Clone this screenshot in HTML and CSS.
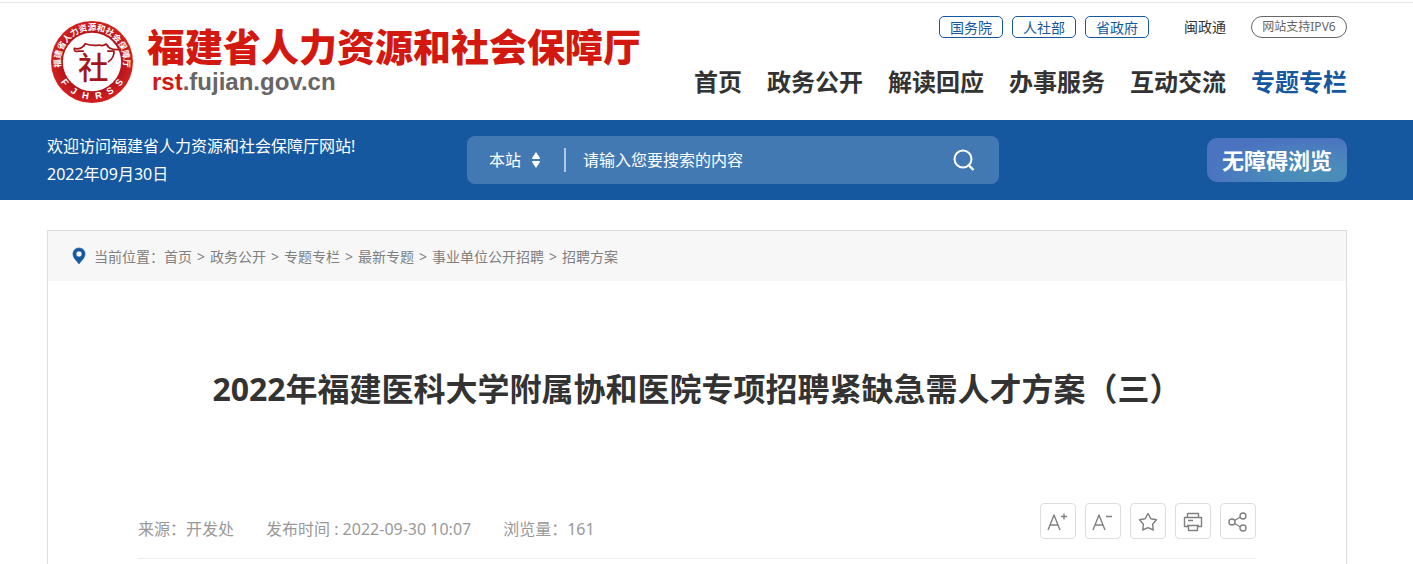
FILE: index.html
```html
<!DOCTYPE html>
<html lang="zh-CN">
<head>
    <meta charset="UTF-8">
    <meta name="viewport" content="width=device-width, initial-scale=1.0">
    <title>2022年福建医科大学附属协和医院专项招聘紧缺急需人才方案（三）</title>
    <link rel="stylesheet" href="styles.css">
</head>
<body>
    <header class="header">
        <div class="container header-inner">
            <a class="brand" href="#">
                <svg class="logo" viewBox="0 0 242 242" aria-hidden="true">
                    <defs>
                        <radialGradient id="ring">
                            <stop offset="70%" stop-color="#b3141b"/>
                            <stop offset="100%" stop-color="#d3201f"/>
                        </radialGradient>
                        <path id="arc" d="M35 156 A93 93 0 1 1 207 156"/>
                    </defs>
                    <circle cx="121" cy="121" r="121" fill="url(#ring)"/>
                    <circle cx="121" cy="121" r="86" fill="#fff"/>
                    <text class="ring-cn"><textPath href="#arc" startOffset="50%">福建省人力资源和社会保障厅</textPath></text>
                    <g class="ring-en">
                        <text x="121" y="231" transform="rotate(53 121 121)">F</text>
                        <text x="121" y="231" transform="rotate(32 121 121)">J</text>
                        <text x="121" y="231" transform="rotate(11 121 121)">H</text>
                        <text x="121" y="231" transform="rotate(-11 121 121)">R</text>
                        <text x="121" y="231" transform="rotate(-32 121 121)">S</text>
                        <text x="121" y="231" transform="rotate(-53 121 121)">S</text>
                    </g>
                    <path d="M82 89 Q66 92 69 81 Q91 86 101 67 Q121 74 142 71 Q154 75 163 68 Q171 88 205 84 M101 67 L97 74 M163 68 L168 73 M82 89 H95 M168 89 H186 Q187 108 170 120" fill="none" stroke="#a4161b" stroke-width="5" stroke-linecap="round" stroke-linejoin="round"/>
                    <text class="ring-mark" x="125" y="172">社</text>
                </svg>
                <span class="brand-text">
                    <span class="brand-name">福建省人力资源和社会保障厅</span>
                    <span class="brand-url"><em>rst</em>.fujian.gov.cn</span>
                </span>
            </a>
            <div class="header-right">
                <div class="top-links">
                    <a class="pill" href="#">国务院</a>
                    <a class="pill" href="#">人社部</a>
                    <a class="pill" href="#">省政府</a>
                    <a class="plain" href="#">闽政通</a>
                    <a class="ipv6" href="#">网站支持IPV6</a>
                </div>
                <nav class="nav">
                    <a href="#">首页</a>
                    <a href="#">政务公开</a>
                    <a href="#">解读回应</a>
                    <a href="#">办事服务</a>
                    <a href="#">互动交流</a>
                    <a class="active" href="#">专题专栏</a>
                </nav>
            </div>
        </div>
    </header>

    <div class="bar">
        <div class="container bar-inner">
            <div class="welcome">
                <p>欢迎访问福建省人力资源和社会保障厅网站!</p>
                <p>2022年09月30日</p>
            </div>
            <form class="search" onsubmit="return false">
                <select class="search-scope" aria-label="搜索范围">
                    <option>本站</option>
                </select>
                <svg class="arrows" viewBox="0 0 10 18" aria-hidden="true">
                    <path d="M5 1 L9 7 Q9 8 8 8 H2 Q1 8 1 7 Z M5 17 L1 11 Q1 10 2 10 H8 Q9 10 9 11 Z" fill="#fff"/>
                </svg>
                <input class="search-input" type="text" placeholder="请输入您要搜索的内容" aria-label="搜索内容">
                <button class="search-button" type="submit" aria-label="搜索">
                    <svg viewBox="0 0 22 22" width="22" height="22">
                        <circle cx="10" cy="10" r="8.5" fill="none" stroke="#fff" stroke-width="2"/>
                        <path d="M15 15.5 L20.5 21" stroke="#fff" stroke-width="2.4"/>
                    </svg>
                </button>
            </form>
            <button class="barrier-free" type="button">无障碍浏览</button>
        </div>
    </div>

    <div class="container page">
        <main class="article">
            <nav class="crumbs">
                <svg class="pin" viewBox="0 0 14 18" aria-hidden="true">
                    <path fill-rule="evenodd" d="M7 1 C3 1 1 4 1 7 C1 11 5 14 7 17 C9 14 13 11 13 7 C13 4 11 1 7 1 Z M7 4 A3 3 0 1 1 7 10 A3 3 0 1 1 7 4 Z" fill="#1558a0" stroke="#1558a0" stroke-width="0.6"/>
                </svg>
                <span>当前位置：</span>
                <a href="#">首页</a><i>&gt;</i>
                <a href="#">政务公开</a><i>&gt;</i>
                <a href="#">专题专栏</a><i>&gt;</i>
                <a href="#">最新专题</a><i>&gt;</i>
                <a href="#">事业单位公开招聘</a><i>&gt;</i>
                <a href="#">招聘方案</a>
            </nav>
            <h1>2022年福建医科大学附属协和医院专项招聘紧缺急需人才方案（三）</h1>
            <div class="meta">
                <span>来源：开发处</span>
                <span>发布时间 : 2022-09-30 10:07</span>
                <span>浏览量：161</span>
                <div class="tools">
                    <button type="button" aria-label="放大字体">
                        <svg viewBox="0 0 34 34"><path d="M7 26 L13 11 L19 26 M9 21 H17 M20 12.5 H26 M23 9.5 V15.5"/></svg>
                    </button>
                    <button type="button" aria-label="缩小字体">
                        <svg viewBox="0 0 34 34"><path d="M7 26 L13 11 L19 26 M9 21 H17 M20 12.5 H26"/></svg>
                    </button>
                    <button type="button" aria-label="收藏">
                        <svg viewBox="0 0 34 34"><path d="M17 9.5 L19.8 14.7 L25.5 15.8 L21.6 20.2 L22.3 26 L17 23.7 L11.7 26 L12.4 20.2 L8.5 15.8 L14.2 14.7 Z"/></svg>
                    </button>
                    <button type="button" aria-label="打印">
                        <svg viewBox="0 0 34 34"><path d="M11.5 13 V9.5 H22.5 V13 M12.5 22.5 H8.5 V13.5 H25.5 V22.5 H21.5 M12 16.5 H17 M11 21.5 H23 M12.5 21.5 V26.5 H21.5 V21.5"/></svg>
                    </button>
                    <button type="button" aria-label="分享">
                        <svg viewBox="0 0 34 34"><path d="M13.5 16.5 L19.5 13 M13.5 19.5 L19.5 23"/><circle cx="11" cy="18" r="3"/><circle cx="22" cy="12" r="3"/><circle cx="22" cy="24" r="3"/></svg>
                    </button>
                </div>
            </div>
        </main>
    </div>
</body>
</html>
```
FILE: styles.css
```css
* {
    box-sizing: border-box;
    margin: 0;
    padding: 0;
}

body {
    display: flex;
    flex-direction: column;
    min-height: 100vh;
    padding-top: 2px;
    font-family: "Noto Sans", "Noto Sans CJK SC", sans-serif;
    font-size: 16px;
    color: #333;
    background-color: #fff;
}

a {
    color: inherit;
    text-decoration: none;
}

button, input, select {
    font-family: inherit;
    border: none;
    background: none;
}

button {
    cursor: pointer;
}

.container {
    width: 100%;
    padding: 0 66px 0 47px;
}

/* header */
.header {
    height: 118px;
    border-top: 1px solid #e5e5e5;
}

.header-inner {
    display: flex;
    justify-content: space-between;
}

.brand {
    display: flex;
    gap: 14px;
    padding: 18px 0 0 4px;
}

.logo {
    width: 82px;
    height: 82px;
}

.ring-cn {
    font-size: 25px;
    font-weight: bold;
    fill: #fff;
    text-anchor: middle;
}

.ring-en {
    font-family: "Liberation Sans", sans-serif;
    font-size: 28px;
    font-weight: bold;
    fill: #fff;
    text-anchor: middle;
}

.ring-mark {
    font-size: 90px;
    font-weight: 500;
    fill: #a4161b;
    text-anchor: middle;
}

.brand-text {
    display: flex;
    flex-direction: column;
}

.brand-name {
    font-family: "Noto Sans CJK SC", sans-serif;
    font-size: 38px;
    font-weight: 900;
    line-height: 48px;
    color: #d2180f;
    white-space: nowrap;
}

.brand-url {
    padding-left: 5px;
    font-family: "Liberation Sans", Arial, sans-serif;
    font-size: 24px;
    font-weight: bold;
    line-height: 26px;
    color: #666;
}

.brand-url em {
    font-style: normal;
    color: #d2180f;
}

.header-right {
    padding-top: 13px;
}

.top-links {
    display: flex;
    justify-content: flex-end;
    gap: 9px;
    font-size: 14px;
    line-height: 22px;
}

.pill {
    padding: 0 10px;
    border: 1px solid #1558a0;
    border-radius: 5px;
    color: #1558a0;
}

.plain {
    margin: 0 16px 0 26px;
}

.ipv6 {
    min-width: 96px;
    border: 1px solid #666;
    border-radius: 12px;
    font-size: 12px;
    line-height: 20px;
    text-align: center;
    color: #666;
}

.pill, .ipv6 {
    height: 22px;
}

.nav {
    display: flex;
    gap: 25px;
    margin-top: 26px;
    font-size: 24px;
    font-weight: bold;
    line-height: 36px;
    white-space: nowrap;
}

.nav .active {
    color: #1558a0;
}

/* blue bar */
.bar {
    background-color: #1558a0;
    color: #fff;
}

.bar-inner {
    display: flex;
    align-items: center;
    height: 80px;
}

.welcome {
    flex: 0 0 420px;
    line-height: 28px;
}

.search {
    display: flex;
    align-items: center;
    flex: 0 1 532px;
    height: 48px;
    padding: 0 24px 0 22px;
    border-radius: 8px;
    background-color: rgba(255, 255, 255, 0.2);
}

.search-scope {
    width: 36px;
    appearance: none;
    font-size: 16px;
    color: #fff;
}

.search-scope option {
    color: #333;
}

.arrows {
    width: 10px;
    height: 18px;
    margin: 0 23px 0 6px;
}

.search-input {
    flex: 1;
    min-width: 0;
    height: 24px;
    padding-left: 17px;
    border-left: 2px solid rgba(255, 255, 255, 0.6);
    font-size: 16px;
    color: #fff;
    outline: none;
}

.search-input::placeholder {
    color: #fff;
    opacity: 1;
}

.search-button {
    display: flex;
}

.barrier-free {
    width: 140px;
    height: 44px;
    margin-left: auto;
    border-radius: 10px;
    background: radial-gradient(ellipse at 75% 80%, #4a90b8 0%, #4a8abb 25%, #4a74c0 70%);
    font-size: 22px;
    font-weight: bold;
    line-height: 40px;
    color: #fff;
}

/* article */
.page {
    display: flex;
    flex: 1;
    padding-top: 30px;
}

.article {
    flex: 1;
    border: 1px solid #ddd;
    border-bottom: none;
}

.crumbs {
    display: flex;
    align-items: center;
    height: 50px;
    padding-left: 24px;
    background-color: #f7f7f7;
    font-size: 14px;
    color: #808080;
}

.crumbs i {
    width: 18px;
    font-size: 14px;
    font-style: normal;
    text-align: center;
}

.pin {
    width: 14px;
    height: 18px;
    margin-right: 8px;
}

h1 {
    padding: 84px 20px 0;
    font-size: 32px;
    line-height: 48px;
    text-align: center;
}

.meta {
    display: flex;
    align-items: flex-end;
    gap: 32px;
    margin: 80px 90px 0;
    padding: 10px 0 19px;
    border-bottom: 1px solid #eee;
    line-height: 20px;
    color: #999;
}

.tools {
    display: flex;
    gap: 9px;
    margin-left: auto;
}

.tools button {
    width: 36px;
    height: 36px;
    border: 1px solid #ddd;
    border-radius: 4px;
}

.tools svg {
    display: block;
    fill: none;
    stroke: #808080;
    stroke-width: 1.4;
    stroke-linejoin: round;
}
```
